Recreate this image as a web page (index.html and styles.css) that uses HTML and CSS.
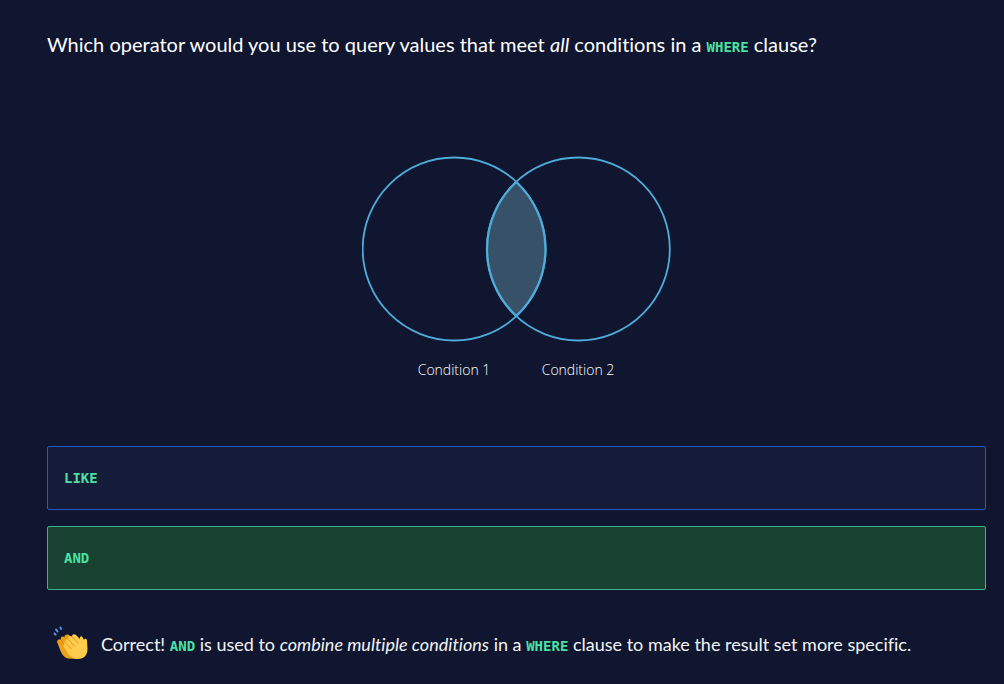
FILE: index.html
```html
<!DOCTYPE html>
<html lang="en">
<head>
<meta charset="utf-8">
<title>Quiz</title>
<link rel="stylesheet" href="styles.css">
</head>
<body>
<main class="quiz">
  <h1 class="question">Which operator would you use to query values that meet <em>all</em> conditions in a <code>WHERE</code> clause?</h1>
  <figure class="diagram">
    <svg class="venn" width="310" height="240" viewBox="362 150 310 240" role="img" aria-label="Two overlapping conditions">
      <g fill="none" stroke="#4dacd9" stroke-width="1.8">
        <circle cx="454.2" cy="249" r="91.5"/>
        <circle cx="578.3" cy="249" r="91.5"/>
      </g>
      <path d="M516.25 182A91.5 91.5 0 0 1 516.25 316A91.5 91.5 0 0 1 516.25 182Z" fill="#375168" stroke="#4dacd9" stroke-width="2.2"/>
      <text class="venn-label" x="454" y="375">Condition 1</text>
      <text class="venn-label" x="578" y="375">Condition 2</text>
    </svg>
  </figure>
  <div class="options">
    <button class="option" type="button"><code>LIKE</code></button>
    <button class="option option-correct" type="button"><code>AND</code></button>
  </div>
  <div class="feedback">
    <svg class="clap" width="36" height="36" viewBox="0 0 36 36" aria-hidden="true">
      <path d="M5 18C3 15 5 12.500 8 14C7 11 9 9.500 11.500 11C12 8 15 8 17 10L28 20L24 33L15 32.500C9 31 7 24 5 18Z" fill="#ef9f15"/>
      <path d="M11 21C9 18 11 15.500 13 17C11.500 14 13 12 15.500 13.500C14.500 10.500 16.500 9 19 10.500C19 8 21.500 7.500 23.500 9.500L27 13C26.500 10.500 28 9.500 29.500 11L31 14C31.500 12 34 12.500 34 15L34.500 23C34.500 29 31 33 25 33C18 33 15 28 11 21Z" fill="#ffcb4c"/>
      <path d="M13 17L18 23M15.500 13.500L21 20M19 10.500L25 17" fill="none" stroke="#e9a325" stroke-width="1.100" stroke-linecap="round"/>
      <path d="M8 14L11 19M11.500 11L13 13" fill="none" stroke="#d9850b" stroke-width="1" stroke-linecap="round"/>
      <path d="M1.500 7.500L2.500 8.500M3 3.500L4.500 5.500M7.500 1.500L8 3" fill="none" stroke="#5597e8" stroke-width="2" stroke-linecap="round"/>
    </svg>
    <p class="explanation">Correct! <code>AND</code> is used to <em>combine multiple conditions</em> in a <code>WHERE</code> clause to make the result set more specific.</p>
  </div>
</main>
</body>
</html>
```
FILE: styles.css
```css
* {
  box-sizing: border-box;
}

body {
  margin: 0;
  background: #10162f;
  color: #fff;
  font-family: Lato, "Open Sans", sans-serif;
  font-variant-ligatures: none;
}

code {
  color: #4be1a4;
  font: bold 14px "DejaVu Sans Mono", monospace;
}

.quiz {
  display: flex;
  flex-direction: column;
  padding: 29px 18px 20px 47px;
}

.question {
  margin: 0;
  font-size: 20px;
  font-weight: 400;
  line-height: 30px;
}

.diagram {
  display: flex;
  justify-content: center;
  margin: 91px 0 56px;
}

.venn-label {
  fill: #fff;
  font: 300 14px "Open Sans", sans-serif;
  text-anchor: middle;
}

.options {
  display: flex;
  flex-direction: column;
  gap: 16px;
}

.option {
  width: 100%;
  height: 64px;
  padding: 0 16px;
  border: 1px solid #2659c5;
  border-radius: 2px;
  background: #151c39;
  text-align: left;
  cursor: pointer;
}

.option-correct {
  border-color: #3bb588;
  background: #184132;
}

.feedback {
  display: flex;
  align-items: center;
  gap: 12px;
  margin-top: 36px;
  padding-left: 6px;
}

.clap {
  flex: none;
}

.explanation {
  margin: 0;
  color: #f3f3f5;
  font-size: 18px;
  line-height: 26px;
}
```
